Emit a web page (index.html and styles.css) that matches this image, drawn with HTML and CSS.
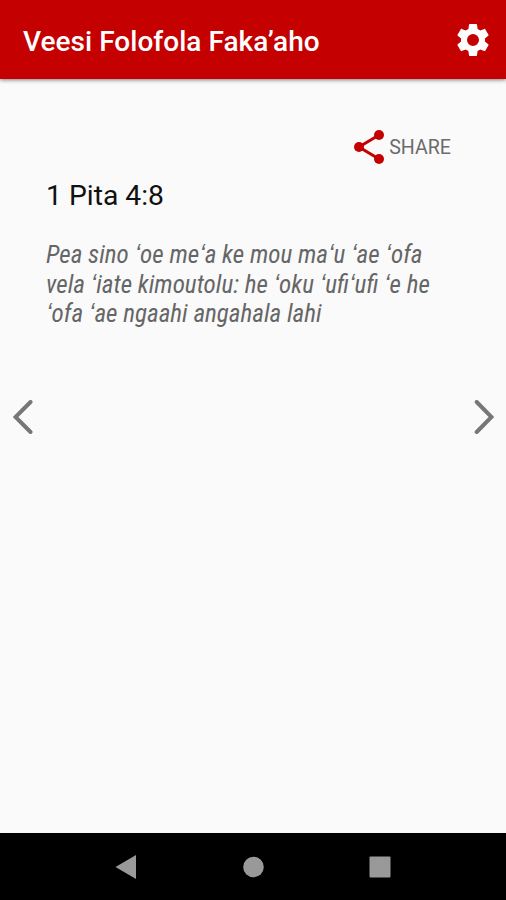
FILE: index.html
```
<!DOCTYPE html>
<html lang="to">
	<head>
		<title>Veesi Folofola Fakaʼaho</title>
		<meta charset="utf-8"/>
		<link rel="stylesheet" href="styles.css">
	</head>
	<body>
		<header class="toolbar">
			<h1 class="title"><span>Veesi Folofola Fakaʼaho</span></h1>
			<svg class="settings" viewBox="0 0 24 24" width="40" height="40">
				<path fill="#fff" d="M19.14 12.94c.04-.3.06-.61.06-.94s-.02-.64-.07-.94l2.03-1.58c.18-.14.23-.41.12-.61l-1.92-3.32c-.12-.22-.37-.29-.59-.22l-2.39.96c-.5-.38-1.03-.7-1.62-.94l-.36-2.54c-.04-.24-.24-.41-.48-.41h-3.84c-.24 0-.43.17-.47.41l-.36 2.54c-.59.24-1.13.57-1.62.94l-2.39-.96c-.22-.08-.47 0-.59.22L2.74 8.87c-.12.21-.08.47.12.61l2.03 1.58c-.05.3-.09.63-.09.94s.02.64.07.94l-2.03 1.58c-.18.14-.23.41-.12.61l1.92 3.32c.12.22.37.29.59.22l2.39-.96c.5.38 1.03.7 1.62.94l.36 2.54c.05.24.24.41.48.41h3.84c.24 0 .44-.17.47-.41l.36-2.54c.59-.24 1.13-.56 1.62-.94l2.39.96c.22.08.47 0 .59-.22l1.92-3.32c.12-.22.07-.47-.12-.61l-2.01-1.58zM12 15.6A3.6 3.6 0 1 1 12 8.4a3.6 3.6 0 0 1 0 7.2z"/>
			</svg>
		</header>

		<main class="page">
			<svg class="arrow" viewBox="0 0 20 34" width="20" height="34">
				<path d="M17.5 2L2.5 17L17.5 32"/>
			</svg>

			<article class="verse">
				<div class="share">
					<svg viewBox="0 0 32 34" width="32" height="34">
						<path d="M26 5L6 17L26 29"/>
						<circle cx="26" cy="5" r="5"/>
						<circle cx="6" cy="17" r="5"/>
						<circle cx="26" cy="29" r="5"/>
					</svg>
					<span>SHARE</span>
				</div>
				<h2 class="reference"><span>1 Pita 4:8</span></h2>
				<p class="text">
					<span>Pea sino ʻoe meʻa ke mou maʻu ʻae ʻofa</span><br/>
					<span>vela ʻiate kimoutolu: he ʻoku ʻufiʻufi ʻe he</span><br/>
					<span>ʻofa ʻae ngaahi angahala lahi</span>
				</p>
			</article>

			<svg class="arrow" viewBox="0 0 20 34" width="20" height="34">
				<path d="M2.7 2L17.5 17L2.7 32"/>
			</svg>
		</main>

		<footer class="navbar">
			<svg viewBox="0 0 22 24" width="22" height="24"><path d="M21 0V24L0.5 12z"/></svg>
			<svg viewBox="0 0 22 22" width="22" height="22"><circle cx="11.5" cy="11" r="10.3"/></svg>
			<svg viewBox="0 0 22 22" width="22" height="22"><rect x="0.5" y="0.5" width="21" height="21" rx="1"/></svg>
		</footer>
	</body>
</html>
```

FILE: styles.css
```
body {
	margin: 0;
	height: 900px;
	display: flex;
	flex-direction: column;
	background-color: #fafafa;
	font-family: Roboto, sans-serif;
	overflow: hidden;
}

h1, h2, p {
	margin: 0;
}

svg {
	flex: none;
}

.toolbar {
	height: 79px;
	box-sizing: border-box;
	padding: 0 13px 0 23px;
	display: flex;
	align-items: center;
	justify-content: space-between;
	background-color: #c40000;
	box-shadow: 0 1px 4px rgba(0, 0, 0, 0.5);
}

.title {
	color: #fff;
	font-size: 28px;
	font-weight: 500;
	letter-spacing: 0.03px;
	line-height: 36px;
	padding-top: 4px;
}

.page {
	flex: 1;
	display: flex;
	justify-content: space-between;
	padding: 0 12px 0 13px;
}

.arrow {
	margin-top: 321px;
	fill: none;
	stroke: #777;
	stroke-width: 4;
	stroke-linecap: round;
}

.verse {
	width: 405px;
	margin-right: 10px;
	padding-top: 50px;
}

.share {
	display: flex;
	align-items: center;
	justify-content: flex-end;
	gap: 4px;
	height: 35px;
	color: #6c6c6c;
	font-size: 19.6px;
}

.share span {
	padding-top: 2px;
}

.share svg {
	fill: #c40000;
}

.share path {
	fill: none;
	stroke: #c40000;
	stroke-width: 3;
}

.reference {
	margin-top: 14px;
	font-size: 28.3px;
	font-weight: 400;
	line-height: 36px;
	color: #111;
}

.text {
	margin-top: 26px;
	font-family: "Roboto Condensed", Roboto, sans-serif;
	font-size: 25.1px;
	font-style: italic;
	line-height: 29.5px;
	color: #666;
	white-space: nowrap;
}

.navbar {
	height: 67px;
	display: flex;
	align-items: center;
	justify-content: center;
	gap: 105px;
	background-color: #000;
}

.navbar svg {
	fill: #999;
}
```
